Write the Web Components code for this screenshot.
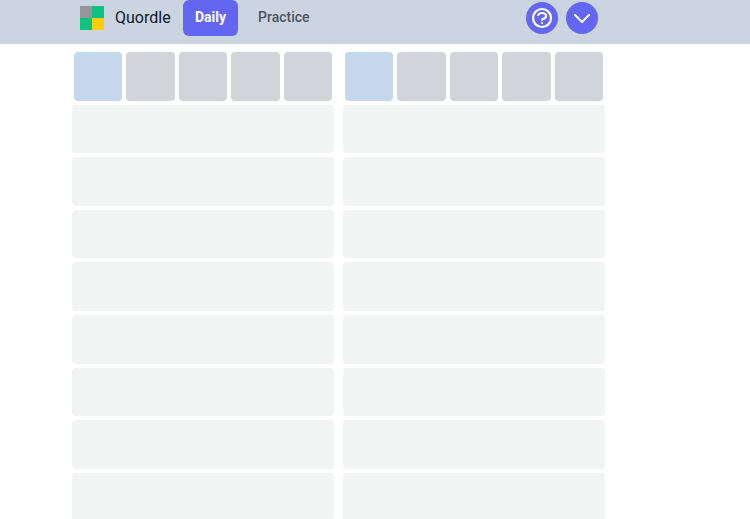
<!DOCTYPE html>
<html><head><meta charset="utf-8">
<style>
html,body{margin:0;padding:0;height:519px;overflow:hidden;background:#fff;font-family:Roboto,"Liberation Sans",sans-serif}
q-app{display:block}
</style></head>
<body>
<q-app></q-app>
<script>
function el(name, html){
  customElements.define(name, class extends HTMLElement{
    constructor(){super();this.attachShadow({mode:'open'}).innerHTML=html;}
  });
}
el('q-logo',`<style>:host{display:grid;grid-template-columns:12px 12px;grid-template-rows:12px 12px;width:24px;height:24px;flex:none}
i{display:block}</style><i style="background:#94979a"></i><i style="background:#10c27f"></i><i style="background:#10c27f"></i><i style="background:#fccc0f"></i>`);
el('q-tab',`<style>:host{display:flex;align-items:center;justify-content:center;height:36px;border-radius:6px;font:500 14px/20px Roboto,sans-serif;color:#4b5563;padding:0 20px 2px;box-sizing:border-box}
:host([active]){background:#6366f1;color:#fff;font-weight:700;padding:0 12px 2px;width:55px}</style><slot></slot>`);
el('q-round',`<style>:host{display:flex;align-items:center;justify-content:center;width:32px;height:32px;border-radius:50%;background:#6366f1;flex:none}</style><slot></slot>`);
el('q-header',`<style>:host{display:flex;align-items:flex-start;height:44px;background:#cbd5e1;box-sizing:border-box;padding-left:80px}
.logo{display:flex;align-items:center;margin-top:6px}
.name{font:400 16px/24px Roboto,sans-serif;color:#111827;margin-left:11px;margin-right:12px;width:56px;white-space:nowrap}
.right{display:flex;gap:8px;margin-left:auto;margin-right:152px;margin-top:2px}
.tabs{display:flex}
</style>
<div class="logo"><q-logo></q-logo><span class="name">Quordle</span></div>
<div class="tabs"><q-tab active>Daily</q-tab><q-tab>Practice</q-tab></div>
<div class="right">
<q-round><svg width="24" height="24" viewBox="0 0 24 24" fill="none" stroke="#fff" stroke-width="2.200" stroke-linecap="round" stroke-linejoin="round"><path d="M8.228 9c.549-1.165 2.03-2 3.772-2 2.21 0 4 1.343 4 3 0 1.4-1.278 2.575-3.006 2.907-.542.104-.994.54-.994 1.093m0 3h.01M21 12a9 9 0 11-18 0 9 9 0 0118 0z"/></svg></q-round>
<q-round><svg width="24" height="24" viewBox="0 0 24 24" fill="none" stroke="#fff" stroke-width="2" stroke-linecap="round" stroke-linejoin="round"><path d="M19 9l-7 7-7-7"/></svg></q-round>
</div>`);
el('q-cell',`<style>:host{display:block;border-radius:4px;background:#d1d5d9}
:host([active]){background:#c5d7ec}</style>`);
el('q-row',`<style>:host{display:grid;grid-template-columns:repeat(5,1fr);gap:4px;padding:0 2px;height:48.6px;box-sizing:border-box;border-radius:4px;background:#f2f4f4}
:host([guess]){background:transparent}</style><slot></slot>`);
class Board extends HTMLElement{
  constructor(){super();
    const cell='<q-cell active></q-cell>'+'<q-cell></q-cell>'.repeat(4);
    this.attachShadow({mode:'open'}).innerHTML=`<style>:host{display:grid;grid-auto-rows:48.6px;row-gap:4px;width:262px;flex:none}</style>
    <q-row guess>${cell}</q-row>`+'<q-row></q-row>'.repeat(8);
  }
}
customElements.define('q-board',Board);
el('q-app',`<style>:host{display:block}
main{display:flex;gap:9px;padding:8px 0 0 72px}</style>
<q-header></q-header><main><q-board></q-board><q-board></q-board></main>`);
</script>
</body></html>
